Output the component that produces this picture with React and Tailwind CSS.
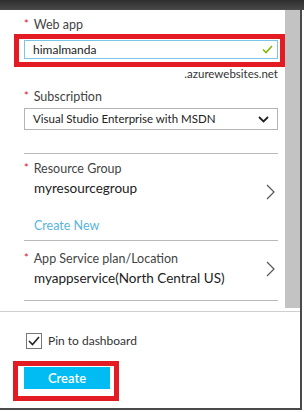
import React from "react";

const Star = () => <span className="text-[#e00b1c] text-[11px] leading-[11px] mr-[5px] relative -top-[2px]">*</span>;

const Label = ({ children }) => (
  <div className="flex items-center h-[16px] text-[12.5px] leading-[16px] text-[#444]">
    <Star />
    {children}
  </div>
);

const ChevronRight = () => (
  <svg width="9" height="16" viewBox="0 0 9 16" className="shrink-0 block">
    <path d="M1 1l7 7-7 7" fill="none" stroke="#555" strokeWidth="1.2" />
  </svg>
);

const App = () => {
  return (
    <div
      className="w-[304px] h-[412px] bg-white flex flex-col overflow-hidden"
      style={{ fontFamily: 'Lato, "Open Sans", sans-serif' }}
    >
      {/* window top edge */}
      <div className="h-[10px] bg-gradient-to-b from-[#2e2e2e] to-[#4a4a4a] shrink-0" />

      <div className="flex h-[398px] shrink-0">
        <div className="w-[300px] flex flex-col">
          <div className="flex h-[301px]">
            {/* form */}
            <div className="w-[285px] pl-[24px] pr-[7px] flex flex-col">
              <div className="mt-[7px]">
                <Label>Web app</Label>
              </div>
              <div className="mt-[1px] -ml-[10px] -mr-[7px] border-[5px] border-[#e31b23] pl-[5px] pr-[2px] pt-[1px] pb-[3px]">
                <div className="h-[19px] border border-[#7cc4e3] flex items-center pl-[8px] pr-[4px] text-[12px] leading-[17px] text-[#222]">
                  <span className="flex-1">himalmanda</span>
                  <svg width="11" height="9" viewBox="0 0 11 9">
                    <path d="M1 4.5l3 3L10 1" fill="none" stroke="#7fba00" strokeWidth="1.6" />
                  </svg>
                </div>
              </div>
              <div className="text-right text-[11.5px] leading-[14px] text-[#333]">.azurewebsites.net</div>

              <div className="mt-[8px]">
                <Label>Subscription</Label>
              </div>
              <div className="mt-[3px] h-[22px] border border-[#b4b4b4] flex items-center pl-[8px] pr-[8px] text-[11.5px] leading-[18px] text-[#222]">
                <span className="flex-1">Visual Studio Enterprise with MSDN</span>
                <svg width="11" height="7" viewBox="0 0 11 7">
                  <path d="M1 1l4.5 4.5L10 1" fill="none" stroke="#222" strokeWidth="1.8" />
                </svg>
              </div>

              <div className="mt-[23px] border-t border-[#b9b9b9]" />

              <div className="flex items-start">
                <div className="flex-1">
                  <div className="mt-[7px]">
                    <Label>Resource Group</Label>
                  </div>
                  <div className="pl-[10px] mt-[1px] text-[13.5px] leading-[20px] text-[#222]">myresourcegroup</div>
                </div>
                <div className="pt-[30px] pr-[3px]">
                  <ChevronRight />
                </div>
              </div>
              <div className="pl-[10px] mt-[18px] text-[12.5px] leading-[16px] text-[#59b4d9]">Create New</div>
              <div className="mt-[6px] border-t border-[#b9b9b9]" />

              <div className="flex items-start">
                <div className="flex-1">
                  <div className="mt-[10px]">
                    <Label>App Service plan/Location</Label>
                  </div>
                  <div className="pl-[10px] mt-[1px] text-[13.5px] leading-[20px] text-[#222]">myappservice(North Central US)</div>
                </div>
                <div className="pt-[20px] pr-[3px]">
                  <ChevronRight />
                </div>
              </div>
              <div className="mt-[12px] border-t border-[#b9b9b9]" />
            </div>
            {/* scrollbar */}
            <div className="w-[15px] h-[298px] bg-[#c3c3c3]" />
          </div>

          {/* footer */}
          <div className="border-t border-[#cfcfcf] flex flex-col flex-1">
            <div className="mt-[21px] ml-[26px] h-[16px] flex items-center gap-[6px]">
              <div className="w-[16px] h-[16px] border border-[#777] flex items-center justify-center">
                <svg width="12" height="10" viewBox="0 0 12 10">
                  <path d="M1 5l3.5 3.5L11 1" fill="none" stroke="#222" strokeWidth="1.6" />
                </svg>
              </div>
              <span className="text-[12px] leading-[16px] text-[#333]">Pin to dashboard</span>
            </div>
            <div className="mt-[12px] ml-[13px] w-[106px] border-[5px] border-[#e31b23] pl-[6px] pr-[3px] pt-[1px] pb-[7px]">
              <button className="block w-[86px] h-[22px] bg-[#00bcf2] text-white text-[13px] leading-[22px] font-semibold">Create</button>
            </div>
          </div>
        </div>
        {/* window right edge */}
        <div className="w-[2px] bg-[#4a4a4a]" />
      </div>
      <div className="h-[2px] w-[302px] bg-[#4a4a4a]" />
    </div>
  );
};

export default App;
